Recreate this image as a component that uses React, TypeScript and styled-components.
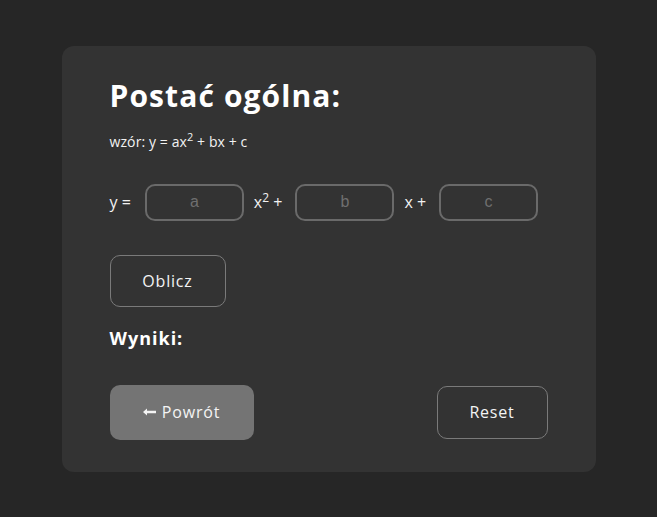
import React from "react";
import styled, { createGlobalStyle } from "styled-components";

const Global = createGlobalStyle`
  html, body { margin: 0; padding: 0; background: #262626; }
  body { font-family: "Open Sans", "Liberation Sans", sans-serif; color: #f2f2f2; }
  * { box-sizing: border-box; }
`;

const Page = styled.div`
  min-height: 517px;
  display: flex;
  align-items: center;
  justify-content: center;
`;

const Card = styled.div`
  width: 534px;
  background: #333333;
  border-radius: 12px;
  padding: 32px 48px 32px 48px;
  display: flex;
  flex-direction: column;
`;

const Title = styled.h1`
  margin: 0;
  font-size: 30px;
  line-height: 36px;
  font-weight: 700;
  letter-spacing: 1.1px;
  color: #ffffff;
`;

const Formula = styled.p`
  margin: 20px 0 0;
  font-size: 14px;
  line-height: 16px;
  letter-spacing: 0.1px;
  sup { font-size: 11px; line-height: 0; }
`;

const Row = styled.div`
  margin-top: 34px;
  display: flex;
  align-items: center;
`;

const Label = styled.span`
  font-size: 16px;
  white-space: nowrap;
  margin: 0 13px 0 10px;
  &:first-child { margin: 0 14px 0 0; }
  sup { font-size: 12px; line-height: 0; }
`;

const Field = styled.input`
  width: 99px;
  height: 37px;
  border: 2px solid #6a6a6a;
  border-radius: 10px;
  background: transparent;
  color: #f2f2f2;
  text-align: center;
  font-family: "Liberation Sans", Arial, sans-serif;
  font-size: 16px;
  outline: none;
  &::placeholder { color: #6f6f6f; }
`;

const Button = styled.button<{ $filled?: boolean }>`
  font-family: "Open Sans", "Liberation Sans", sans-serif;
  font-size: 16px;
  letter-spacing: 0.8px;
  color: #f4f4f4;
  border-radius: 10px;
  cursor: pointer;
  display: inline-flex;
  align-items: center;
  justify-content: center;
  gap: 6px;
  background: ${(p) => (p.$filled ? "#747474" : "transparent")};
  border: ${(p) => (p.$filled ? "none" : "1px solid #7a7a7a")};
`;

const CalcButton = styled(Button)`
  margin-top: 34px;
  align-self: flex-start;
  width: 116px;
  height: 52px;
`;

const Results = styled.h2`
  margin: 20px 0 0;
  font-size: 18px;
  line-height: 22px;
  font-weight: 700;
  letter-spacing: 1px;
  color: #ffffff;
`;

const Footer = styled.div`
  margin-top: 36px;
  display: flex;
  justify-content: space-between;
  align-items: center;
`;

const BackButton = styled(Button)`
  width: 144px;
  height: 55px;
`;

const ResetButton = styled(Button)`
  width: 111px;
  height: 53px;
`;

const Arrow = () => (
  <svg width="13" height="8" viewBox="0 0 13 8" aria-hidden>
    <path d="M0 4 L4 0.5 L4 2.8 L13 2.8 L13 5.2 L4 5.2 L4 7.5 Z" fill="#f4f4f4" />
  </svg>
);

export default function App() {
  return (
    <>
      <Global />
      <Page>
        <Card>
          <Title>Postać ogólna:</Title>
          <Formula>
            wzór: y = ax<sup>2</sup> + bx + c
          </Formula>
          <Row>
            <Label>y =</Label>
            <Field placeholder="a" />
            <Label>
              x<sup>2</sup> +
            </Label>
            <Field placeholder="b" />
            <Label>x +</Label>
            <Field placeholder="c" />
          </Row>
          <CalcButton>Oblicz</CalcButton>
          <Results>Wyniki:</Results>
          <Footer>
            <BackButton $filled>
              <Arrow />
              Powrót
            </BackButton>
            <ResetButton>Reset</ResetButton>
          </Footer>
        </Card>
      </Page>
    </>
  );
}
